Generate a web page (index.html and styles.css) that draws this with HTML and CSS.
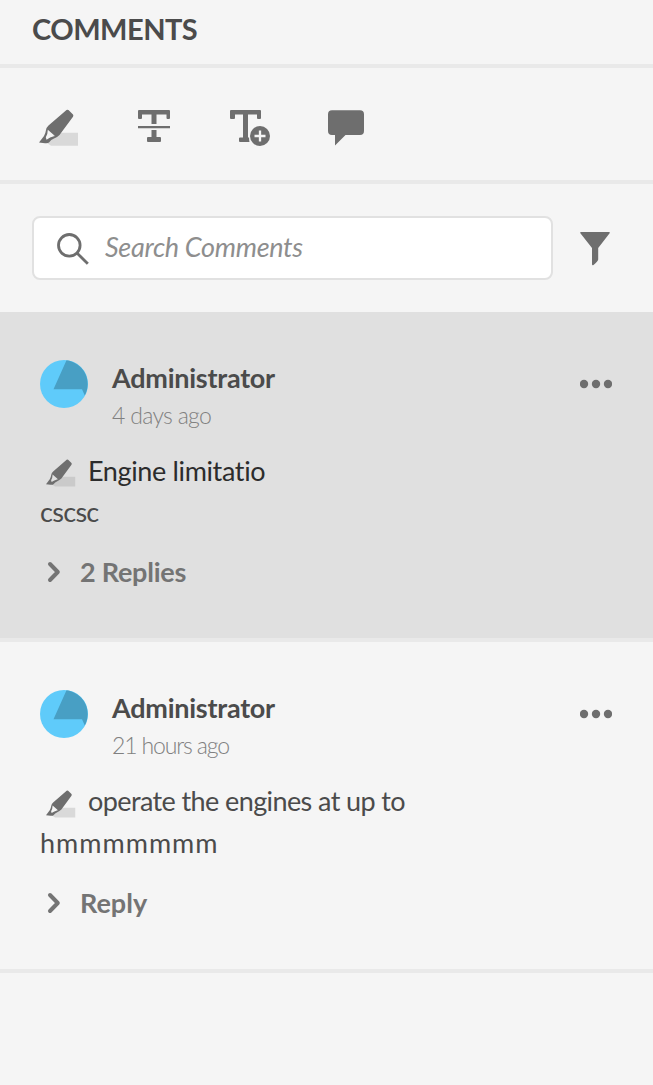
FILE: index.html
```html
<!DOCTYPE html>
<html lang="en">
<head>
<meta charset="utf-8">
<title>Comments</title>
<link rel="stylesheet" href="styles.css">
</head>
<body>
<svg class="defs" aria-hidden="true">
  <symbol id="marker" viewBox="0 0 40 38">
    <path class="marker-ink" d="M17 24.7H39V37.8H12L8 35Z"/>
    <path d="M27.5 2Q28.4 1.3 29.5 2L34 6.4Q34.7 7.4 34 8.7L20.5 27Q18 29.5 15 30.5Q12 31.5 10 34.5Q9 35.5 6 35.2L0 34.5L5 28Q6.5 25.5 7 22Q7.4 19.5 9.5 17.5ZM8.8 21.7Q8.8 26 6.8 29.2L7.5 31.7Q10.5 29.2 16 28Z" fill-rule="evenodd"/>
  </symbol>
  <symbol id="avatar" viewBox="0 0 48 48">
    <circle cx="24" cy="24" r="24" fill="#5fcbfa"/>
    <path d="M26.5 .3A24 24 0 0 1 44.8 35.5L42 29.3H13.5Z" fill="#489fc4"/>
  </symbol>
  <symbol id="dots" viewBox="0 0 32 10">
    <circle cx="4" cy="5" r="4.2"/><circle cx="16" cy="5" r="4.2"/><circle cx="28" cy="5" r="4.2"/>
  </symbol>
  <symbol id="chevron" viewBox="0 0 14 22">
    <path d="M3 3L10.8 11L3 19" fill="none" stroke="#747474" stroke-width="4" stroke-linecap="round" stroke-linejoin="round"/>
  </symbol>
</svg>
<header class="header"><h1 class="title">COMMENTS</h1></header>
<nav class="toolbar">
  <svg class="tool" viewBox="0 0 40 38"><use href="#marker"/></svg>
  <svg class="tool" viewBox="0 0 40 38"><path d="M5 2H35Q36 2 36 3V10Q36 11 35 11H33.5Q32.5 11 32.5 10V6.5H22.5V16H17.5V6.5H8V10Q8 11 7 11H5Q4 11 4 10V3Q4 2 5 2ZM4 18H36V20.2H4ZM17.5 22H22.5V29H26Q27 29 27 30V33Q27 34 26 34H14Q13 34 13 33V30Q13 29 14 29H17.5Z"/></svg>
  <svg class="tool tool-wide" viewBox="0 0 42 38"><path d="M1 2H30Q31 2 31 3V10Q31 11 30 11H28Q27 11 27 10V6.5H18V29.5H19Q19 31.5 19.5 34H10Q9 34 9 33V30.5Q9 29.5 10 29.5H13V6.5H5V10Q5 11 4 11H1Q0 11 0 10V3Q0 2 1 2Z"/><circle cx="30" cy="28" r="10"/><path class="plus" d="M24.5 28H35.5M30 22.5V33.5"/></svg>
  <svg class="tool tool-note" viewBox="0 0 40 38"><path d="M6 2.3H34Q38 2.3 38 6.3V23Q38 27 34 27H19.5L9 37.5V27H6Q2 27 2 23V6.3Q2 2.3 6 2.3Z"/></svg>
</nav>
<section class="search-row">
  <div class="search">
    <svg class="lens" viewBox="0 0 32 32"><circle cx="12.3" cy="12.3" r="10.8"/><path d="M20.2 20.2L30.8 30.8"/></svg>
    <span class="placeholder">Search Comments</span>
  </div>
  <svg class="filter" viewBox="0 0 30 34"><path d="M1 0H29Q30.5 0 29.6 1.2L18.2 16V27.5Q18 29 13.5 33Q12 33.8 12 32V16L.4 1.2Q-.5 0 1 0Z"/></svg>
</section>
<main>
  <article class="comment selected">
    <div class="author">
      <svg class="avatar"><use href="#avatar"/></svg>
      <div class="meta"><span class="name">Administrator</span><span class="time time-days">4 days ago</span></div>
      <svg class="more"><use href="#dots"/></svg>
    </div>
    <div class="quote"><svg class="mark"><use href="#marker"/></svg><span class="quote-engine">Engine limitatio</span></div>
    <div class="body"><span class="body-short">cscsc</span></div>
    <div class="replies"><svg class="chevron"><use href="#chevron"/></svg><span class="reply-count">2 Replies</span></div>
  </article>
  <article class="comment recent">
    <div class="author">
      <svg class="avatar"><use href="#avatar"/></svg>
      <div class="meta"><span class="name">Administrator</span><span class="time time-hours">21 hours ago</span></div>
      <svg class="more"><use href="#dots"/></svg>
    </div>
    <div class="quote"><svg class="mark"><use href="#marker"/></svg><span class="quote-operate">operate the engines at up to</span></div>
    <div class="body"><span class="body-long">hmmmmmmm</span></div>
    <div class="replies"><svg class="chevron"><use href="#chevron"/></svg><span class="reply-action">Reply</span></div>
  </article>
</main>
</body>
</html>
```
FILE: styles.css
```css
* { box-sizing: border-box; }
body { margin: 0; background: #f5f5f5; color: #4b4b4b; font-family: Lato, "Open Sans", sans-serif; font-variant-ligatures: none; --ink: #d9d9d9; }
svg { display: block; flex: none; fill: #6e6e6e; }
.defs { position: absolute; width: 0; height: 0; }
.marker-ink { fill: var(--ink); }
.header { height: 68px; padding: 10px 32px 0; border-bottom: 4px solid #e9e9e9; }
.title { margin: 0; font-size: 29px; line-height: 38px; font-weight: 700; letter-spacing: -0.5px; }
.toolbar { display: flex; height: 116px; padding: 40px 39px 0; border-bottom: 4px solid #e9e9e9; }
.tool { width: 40px; height: 38px; margin-right: 55px; }
.tool-wide { width: 42px; margin-left: 1px; }
.tool-note { margin-left: -1px; }
.plus { fill: none; stroke: #f5f5f5; stroke-width: 2.3; }
.search-row { display: flex; height: 128px; padding: 32px 43px 0 32px; justify-content: space-between; }
.search { display: flex; width: 521px; height: 64px; padding: 15px 0 0 23px; gap: 16px; background: #fff; border: 2px solid #e1e1e1; border-radius: 8px; }
.lens { width: 32px; height: 32px; fill: none; stroke: #6e6e6e; stroke-width: 2.8; }
.placeholder { color: #8e8e8e; font-size: 27px; line-height: 28px; font-style: italic; letter-spacing: -0.3px; white-space: nowrap; }
.filter { width: 30px; height: 34px; margin-top: 16px; }
.comment { height: 330px; padding: 48px 41px 0 40px; border-bottom: 4px solid #e9e9e9; }
.selected { background: #e0e0e0; --ink: #cacaca; }
.recent { height: 331px; }
.author { display: flex; height: 88px; }
.avatar { width: 48px; height: 48px; }
.meta { display: flex; flex: 1; flex-direction: column; padding-left: 24px; align-items: flex-start; }
.name { font-size: 27px; line-height: 36px; font-weight: 700; letter-spacing: -0.25px; }
.time { color: #808080; font-size: 23px; line-height: 39px; font-weight: 300; }
.time-days { letter-spacing: -0.7px; }
.time-hours { letter-spacing: -1.15px; }
.more { width: 32px; height: 10px; margin-top: 19px; }
.quote { display: flex; height: 43px; padding-left: 6px; gap: 12px; font-size: 27px; line-height: 45px; white-space: nowrap; }
.selected .quote { color: #2c2c2c; }
.quote-engine { letter-spacing: -0.36px; }
.quote-operate { letter-spacing: -0.6px; }
.mark { width: 30px; height: 29px; margin-top: 10px; }
.recent .mark { margin-top: 11px; }
.body { height: 50px; font-size: 27px; line-height: 41px; }
.body-short { letter-spacing: -0.7px; }
.body-long { letter-spacing: 1px; }
.recent .quote { height: 44px; }
.replies { display: flex; align-items: center; height: 62px; padding-left: 7px; gap: 19px; color: #747474; font-size: 27px; font-weight: 700; line-height: 32px; }
.replies span { padding-bottom: 1px; }
.reply-count { letter-spacing: -0.25px; }
.chevron { width: 14px; height: 22px; }
```
